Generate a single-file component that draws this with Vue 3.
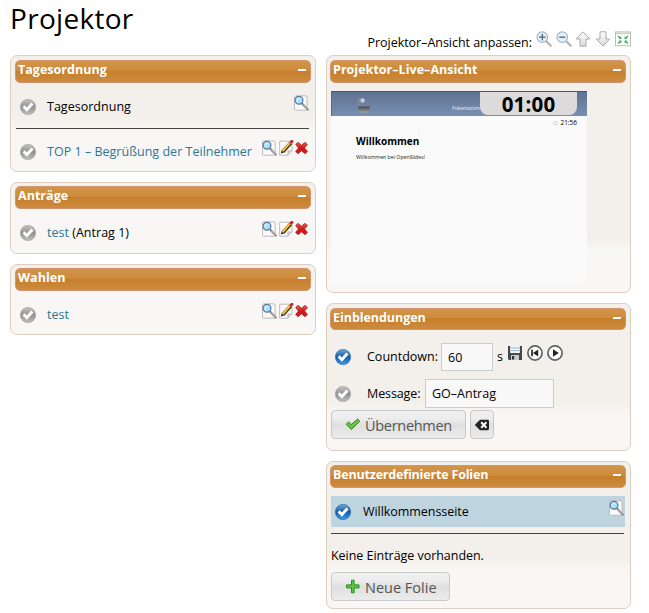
<script setup>
const agenda = [
  { title: 'Tagesordnung', link: false, note: '', tools: ['preview'] },
  { title: 'TOP 1 – Begrüßung der Teilnehmer', link: true, note: '', tools: ['preview', 'edit', 'delete'] },
]
const lists = [
  { title: 'Tagesordnung', cls: 'agenda', items: agenda },
  { title: 'Anträge', cls: 'motions', items: [{ title: 'test', link: true, note: ' (Antrag 1)', tools: ['preview', 'edit', 'delete'] }] },
  { title: 'Wahlen', cls: 'elections', items: [{ title: 'test', link: true, note: '', tools: ['preview', 'edit', 'delete'] }] },
]
const viewTools = ['zoomin', 'zoomout', 'up', 'down', 'fit']
</script>

<template>
  <svg class="sprite" width="0" height="0" aria-hidden="true">
    <defs>
      <linearGradient id="gGrey" x1="0" y1="0" x2="0" y2="1"><stop offset="0" stop-color="#c4c4c4" /><stop offset=".5" stop-color="#929292" /><stop offset="1" stop-color="#c0c0c0" /></linearGradient>
      <linearGradient id="gBlue" x1="0" y1="0" x2="0" y2="1"><stop offset="0" stop-color="#6fa8dc" /><stop offset=".5" stop-color="#155aa8" /><stop offset="1" stop-color="#38a0ee" /></linearGradient>
      <linearGradient id="gArrow" x1="0" y1="0" x2="0" y2="1"><stop offset="0" stop-color="#fff" /><stop offset="1" stop-color="#d8d8d8" /></linearGradient>
      <linearGradient id="gLens" x1="0" y1="0" x2="1" y2="1"><stop offset="0" stop-color="#e4f6ff" /><stop offset="1" stop-color="#84d0f2" /></linearGradient>
      <linearGradient id="gRed" x1="0" y1="0" x2="0" y2="1"><stop offset="0" stop-color="#ee6060" /><stop offset=".5" stop-color="#cb1818" /><stop offset="1" stop-color="#e01818" /></linearGradient>
      <linearGradient id="gBowl" x1="0" y1="0" x2="0" y2="1"><stop offset="0" stop-color="#474747" /><stop offset="1" stop-color="#a0a0a0" /></linearGradient>
    </defs>
    <symbol id="i-off" viewBox="0 0 16 16">
      <circle cx="8" cy="8" r="7.7" fill="url(#gGrey)" stroke="#999" stroke-width=".5" />
      <path d="M3.6 7.4 L6.9 10.6 L12.4 4.6" fill="none" stroke="#fff" stroke-width="2.9" />
    </symbol>
    <symbol id="i-on" viewBox="0 0 16 16">
      <circle cx="8" cy="8" r="7.7" fill="url(#gBlue)" stroke="#235b99" stroke-width=".5" />
      <path d="M3.6 7.4 L6.9 10.6 L12.4 4.6" fill="none" stroke="#fff" stroke-width="2.9" />
    </symbol>
    <symbol id="i-preview" viewBox="0 0 16 16">
      <rect x="1.5" y=".9" width="12.6" height="14.3" rx="1" fill="#fafafa" stroke="#bbb" />
      <path d="M9.5 9 L14.9 14.6" stroke="#777" stroke-width="2" stroke-linecap="round" />
      <path d="M10 9.4 L14.8 14.3" stroke="#e5e5e5" stroke-width=".8" />
      <circle cx="6" cy="5.3" r="3.9" fill="url(#gLens)" stroke="#55779f" stroke-width="1.2" />
    </symbol>
    <symbol id="i-edit" viewBox="0 0 16 16">
      <path d="M1.7 1.2 H14 V11 L10 15.2 H1.7 Z" fill="#fafafa" stroke="#bbb" />
      <path d="M14 11 H10 V15.2" fill="#ddd" stroke="#aaa" stroke-width=".8" />
      <path d="M4.8 11.8 L12.7 3" stroke="#4b3714" stroke-width="3.6" />
      <path d="M4.7 11 L12.4 2.4" stroke="#f3c545" stroke-width="1.9" />
      <path d="M13 2.2 L14 1.2" stroke="#c92525" stroke-width="2.8" stroke-linecap="round" />
      <path d="M2.9 13.6 L3.6 10.7 L5.8 12.6 Z" fill="#222" />
    </symbol>
    <symbol id="i-delete" viewBox="0 0 16 16">
      <path d="M1.8 4.3 L4.2 2 L8 5 L11.8 2 L14.3 4.3 L11.2 8 L14.3 11.6 L11.8 14 L8 10.9 L4.2 14 L1.8 11.6 L4.8 8 Z" fill="url(#gRed)" stroke="#b82424" stroke-width="1" stroke-linejoin="round" />
    </symbol>
    <symbol id="i-zoomin" viewBox="0 0 16 16">
      <path d="M10 10 L14.7 14.7" stroke="#b5b5b5" stroke-width="2.3" stroke-linecap="round" />
      <circle cx="6.3" cy="6.2" r="5.3" fill="#e4f0f8" stroke="#a3b2be" stroke-width="1.1" />
      <path d="M3 6.2 H9.6 M6.3 2.9 V9.5" stroke="#456780" stroke-width="1.3" />
    </symbol>
    <symbol id="i-zoomout" viewBox="0 0 16 16">
      <path d="M10 10 L14.7 14.7" stroke="#b5b5b5" stroke-width="2.3" stroke-linecap="round" />
      <circle cx="6.3" cy="6.2" r="5.3" fill="#e4f0f8" stroke="#a3b2be" stroke-width="1.1" />
      <path d="M3.2 6.2 H9.4" stroke="#5b7ea8" stroke-width="1.6" />
    </symbol>
    <symbol id="i-up" viewBox="0 0 16 16">
      <path d="M8 .8 L14.7 8 H11 V15.2 H5 V8 H1.3 Z" fill="url(#gArrow)" stroke="#a9a9a9" stroke-linejoin="round" />
    </symbol>
    <symbol id="i-down" viewBox="0 0 16 16">
      <path d="M8 15.2 L14.7 8 H11 V.8 H5 V8 H1.3 Z" fill="url(#gArrow)" stroke="#a9a9a9" stroke-linejoin="round" />
    </symbol>
    <symbol id="i-fit" viewBox="0 0 16 16">
      <rect x=".5" y=".9" width="15" height="13.8" fill="#fff" stroke="#b9bdb9" />
      <path d="M1 2.4 H15" stroke="#ccd0cc" stroke-width="1.6" />
      <path d="M3 5 L5.4 7 M13 5 L10.6 7 M3 12.6 L5.4 10.6 M13 12.6 L10.6 10.6" stroke="#39a552" stroke-width="1.3" />
      <path d="M6.4 5.2 V8 H3.8 Z M9.6 5.2 V8 H12.2 Z M6.4 12.4 V9.6 H3.8 Z M9.6 12.4 V9.6 H12.2 Z" fill="#39a552" />
    </symbol>
    <symbol id="i-save" viewBox="0 0 16 16">
      <path d="M1 1 H15 V15 H2 L1 14 Z" fill="#43464c" />
      <rect x="3.2" y="1" width="9.6" height="7" fill="#f4f7fa" />
      <path d="M4 3 H12 M4 5.6 H12" stroke="#9bb5cd" stroke-width="1" />
      <rect x="4" y="10" width="8" height="5" fill="#c9c9c9" />
      <rect x="5" y="11" width="2.2" height="3.5" fill="#333" />
    </symbol>
    <symbol id="i-reset" viewBox="0 0 16 16">
      <circle cx="8" cy="8" r="7.1" fill="#fff" stroke="#606060" stroke-width="1.7" />
      <path d="M5 4.8 V11.2" stroke="#222" stroke-width="1.7" />
      <path d="M11.2 4.4 V11.6 L6 8 Z" fill="#222" />
    </symbol>
    <symbol id="i-play" viewBox="0 0 16 16">
      <circle cx="8" cy="8" r="7.1" fill="#fff" stroke="#606060" stroke-width="1.7" />
      <path d="M6 4.2 V11.8 L11.8 8 Z" fill="#222" />
    </symbol>
    <symbol id="i-ok" viewBox="0 0 16 16">
      <path d="M1.2 7.2 L3.6 4.9 L6.3 7.6 L12.6 2 L14.8 4.2 L6.3 12.6 Z" fill="#6cc644" stroke="#32801f" stroke-linejoin="round" />
    </symbol>
    <symbol id="i-add" viewBox="0 0 16 16">
      <path d="M6.5 1.2 H9.1 V5.9 H14 V8.9 H9.1 V13.8 H6.5 V8.9 H1.6 V5.9 H6.5 Z" fill="#5cc83c" stroke="#259022" stroke-linejoin="round" />
    </symbol>
    <symbol id="i-clear" viewBox="0 0 16 16">
      <path d="M.8 8 L6 2.8 H13.6 Q15 2.8 15 4.2 V11.8 Q15 13.2 13.6 13.2 H6 Z" fill="#222" />
      <path d="M7.2 5.2 L12.4 10.8 M12.4 5.2 L7.2 10.8" stroke="#fff" stroke-width="2" />
    </symbol>
  </svg>

  <main class="page">
    <div class="col left">
      <h1>Projektor</h1>
      <section v-for="l in lists" :key="l.title" class="panel" :class="l.cls">
        <header><span :class="'h-' + l.cls">{{ l.title }}</span><i class="minus" /></header>
        <div v-for="(it, n) in l.items" :key="n" class="row">
          <svg class="check"><use href="#i-off" /></svg>
          <span class="label"><a v-if="it.link">{{ it.title }}</a><template v-else>{{ it.title }}</template>{{ it.note }}</span>
          <span class="tools"><svg v-for="t in it.tools" :key="t" :class="t"><use :href="'#i-' + t" /></svg></span>
        </div>
      </section>
    </div>

    <div class="col right">
      <div class="adjust">
        <span>Projektor–Ansicht anpassen:</span>
        <svg v-for="t in viewTools" :key="t" :class="t"><use :href="'#i-' + t" /></svg>
      </div>

      <section class="panel live">
        <header><span class="h-live">Projektor–Live–Ansicht</span><i class="minus" /></header>
        <div class="beamer">
          <div class="banner">
            <svg class="logo" viewBox="0 0 14 18">
              <path d="M1.5 3 V12" stroke="#8f9499" stroke-width=".8" />
              <circle cx="5.5" cy="4.5" r="2.2" fill="#c9cdd2" />
              <path d="M1 3 L5 5" stroke="#a5a9ad" stroke-width=".8" />
              <path d="M.8 10.5 H13 L11 16.5 H3 Z" fill="url(#gBowl)" />
            </svg>
            <span class="tiny">Präsentations</span>
            <span class="clock">01:00</span>
          </div>
          <div class="time"><i />21:56</div>
          <h2>Willkommen</h2>
          <p>Willkommen bei OpenSlides!</p>
        </div>
      </section>

      <section class="panel overlays">
        <header><span class="h-over">Einblendungen</span><i class="minus" /></header>
        <div class="field count">
          <svg class="check"><use href="#i-on" /></svg>
          <label>Countdown:</label>
          <input type="text" value="60" />
          <span class="unit">s</span>
          <svg><use href="#i-save" /></svg>
          <svg><use href="#i-reset" /></svg>
          <svg><use href="#i-play" /></svg>
        </div>
        <div class="field message">
          <svg class="check"><use href="#i-off" /></svg>
          <label>Message:</label>
          <input type="text" value="GO–Antrag" />
        </div>
        <div class="buttons">
          <button class="apply"><svg><use href="#i-ok" /></svg><span>Übernehmen</span></button>
          <button class="clear"><svg><use href="#i-clear" /></svg></button>
        </div>
      </section>

      <section class="panel slides">
        <header><span class="h-slides">Benutzerdefinierte Folien</span><i class="minus" /></header>
        <div class="welcome">
          <svg class="check"><use href="#i-on" /></svg>
          <span class="label">Willkommensseite</span>
          <span class="tools"><svg class="preview"><use href="#i-preview" /></svg></span>
        </div>
        <hr />
        <p class="empty">Keine Einträge vorhanden.</p>
        <button class="new"><svg><use href="#i-add" /></svg><span>Neue Folie</span></button>
      </section>
    </div>
  </main>
</template>

<style>
body { background: #fff; }
</style>

<style scoped>
* { box-sizing: border-box; }
.sprite { position: absolute; }
.page { width: 649px; height: 613px; display: grid; grid-template-columns: 306px 305px; column-gap: 10px; padding-left: 10px; overflow: hidden; font: 12.5px/18px "Open Sans", "Noto Sans", sans-serif; color: #000; white-space: nowrap; }
.col { display: flex; flex-direction: column; gap: 10px; }
svg { display: block; width: 16px; height: 16px; flex: none; }
h1 { margin: 0; height: 45px; font-size: 28px; font-weight: 400; line-height: 36px; letter-spacing: .3px; }
.panel { border: 1px solid #dfcdc0; border-radius: 7px; padding: 4px; background: linear-gradient(#f3efea 0, #f3efea 66%, #f9f7f5 76%); }
.right .panel { padding: 4px 4px 4px 3px; }
.panel header { display: flex; justify-content: space-between; height: 23px; padding: 0 4px 0 2px; border: 1px solid #d19570; border-radius: 5px; background: linear-gradient(#d29448 0, #cd8c40 45%, #c67e29 46%, #cd8b40 100%); color: #fff; font-weight: 700; line-height: 17px; width: 296px; }
.panel header span { font-size: 12.5px; letter-spacing: .03px; }
.panel header .h-slides { letter-spacing: -.18px; }
.panel header .h-over { letter-spacing: -.05px; }
.minus { width: 8px; height: 2px; margin-top: 8px; background: #fff; }
.agenda { height: 117px; background: linear-gradient(#f3efea 0, #f3efea 50%, #f9f7f5 70%); }
.motions { height: 72px; background: linear-gradient(#f3efea 0, #f9f7f5 45%); }
.elections { height: 71px; background: linear-gradient(#f3efea 0, #f9f7f5 45%); }
.left .motions, .left .elections, .right .slides { padding-top: 3px; }
.row { display: flex; height: 45px; padding: 0 2px 0 5px; }
.row + .row { margin: 0 2px 0 1px; padding: 0 0 0 4px; border-top: 1px solid #444; }
.check { margin-top: 16px; }
.row .label { margin: 15px 0 0 11px; flex: 1; letter-spacing: .02px; }
.tools { display: flex; margin-top: 12px; gap: 1px; }
.tools .delete { width: 15px; margin-left: -1px; }
.row + .row .check { margin-top: 15px; }
.row + .row .label { margin-top: 14px; }
.row + .row .tools { margin-top: 11px; }
a { color: #2d7595; }

.adjust { display: flex; justify-content: flex-end; height: 45px; padding: 31px 0 0 0; gap: 4px; }
.adjust span { line-height: 24px; letter-spacing: -.03px; }
.adjust .zoomout { margin-right: -1px; }
.live { height: 238px; background: linear-gradient(#f3efea 0, #f3efea 77%, #f9f7f5 83%); }
.beamer { margin: 8px 0 0 1px; width: 256px; height: 193px; background: #fafafa; }
.banner { display: flex; height: 25px; padding: 0 10px 0 25px; border-top: 1px solid #47576d; border-left: 1px solid #56677f; background: linear-gradient(#5f7291, #788fb3); }
.logo { width: 14px; height: 18px; margin-top: 4px; }
.tiny { width: 28px; margin-left: 81px; overflow: hidden; font-size: 4.5px; line-height: 33px; color: #eef0f5; }
.clock { width: 97px; height: 23px; border-radius: 0 0 8px 8px; background: #dcdada; font: 700 20.5px/24px "Noto Sans", sans-serif; letter-spacing: .2px; text-align: center; }
.time { display: flex; justify-content: flex-end; align-items: center; gap: 2px; height: 13px; padding-right: 10px; font-size: 6.5px; }
.time i { width: 5px; height: 4px; border: 1px solid #d5d5d5; border-radius: 50%; }
h2 { margin: 5px 0 0 25px; font-size: 10px; line-height: 15px; font-weight: 700; }
.beamer p { margin: 5px 0 0 25px; font-size: 5.2px; line-height: 7px; color: #222; }

.overlays { height: 148px; }
.overlays header { height: 22px; }
.field { display: flex; }
.field label { margin-left: 16px; }
input { border: 1px solid #ccc; border-radius: 0; background: #f8f8f8; color: #000; font: inherit; padding: 0 6px; outline: 0; }
.count { height: 45px; padding: 8px 0 0 5px; }
.count .check { margin-top: 11px; }
.count label { margin-top: 10px; width: 70px; }
.count input { width: 52px; height: 28px; margin: 5px 0 0 4px; }
.unit { margin: 10px 5px 0 4px; width: 5px; }
.count > svg:not(.check) { margin: 7px 4px 0 0; }
.message { height: 43px; padding: 8px 0 0 5px; margin-top: -4px; }
.message .check { margin-top: 7px; }
.message label { margin-top: 6px; width: 54px; letter-spacing: -.1px; }
.message input { width: 129px; height: 29px; margin-left: 4px; margin-top: 0; }
.buttons { display: flex; gap: 4px; padding-left: 1px; margin-top: -4px; }
button { display: flex; align-items: center; height: 29px; margin: 0; border: 1px solid #c8c8c8; border-radius: 4px; background: linear-gradient(#f1f1f1, #ececec 30%, #dfdfdf 50%, #ececec); color: #555; font: 14.5px/20px "Open Sans", "Noto Sans", sans-serif; letter-spacing: -.3px; padding: 0 13px; }
button span { margin-left: 4px; padding-top: 2px; }
.apply { width: 135px; }
.clear { width: 24px; padding: 0 3px; }
.new span { letter-spacing: 0; }

.slides { height: 148px; }
.welcome { display: flex; height: 31px; margin: 8px 1px 0 1px; padding: 0 0 0 4px; background: #bed4df; }
.welcome .check { margin-top: 8px; }
.welcome .label { margin: 7px 0 0 12px; flex: 1; letter-spacing: -.05px; }
.welcome .tools { margin-top: 4px; margin-right: 1px; }
hr { height: 1px; margin: 6px 2px 0 1px; border: 0; background: #444; }
.empty { margin: 13px 0 0 1px; letter-spacing: -.04px; }
.new { width: 119px; margin: 7px 0 0 1px; }
</style>
